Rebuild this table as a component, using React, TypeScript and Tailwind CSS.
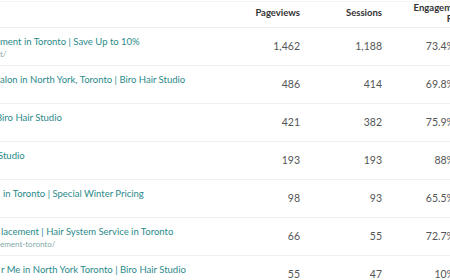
import React from "react";

type Row = { title: string; url?: string; shift: number; pv: string; s: string; er: string };

const rows: Row[] = [
  { title: "ment in Toronto | Save Up to 10%", url: "t/", shift: 0, pv: "1,462", s: "1,188", er: "73.4%" },
  { title: "alon in North York, Toronto | Biro Hair Studio", shift: 0, pv: "486", s: "414", er: "69.8%" },
  { title: "Biro Hair Studio", shift: -4, pv: "421", s: "382", er: "75.9%" },
  { title: "Studio", shift: -2, pv: "193", s: "193", er: "88%" },
  { title: "in Toronto | Special Winter Pricing", shift: 3, pv: "98", s: "93", er: "65.5%" },
  { title: "lacement | Hair System Service in Toronto", url: "ement-toronto/", shift: 1, pv: "66", s: "55", er: "72.7%" },
  { title: "r Me in North York Toronto | Biro Hair Studio", shift: 1, pv: "55", s: "47", er: "10%" },
];

export default function App() {
  return (
    <div
      className="w-[450px] h-[280px] overflow-hidden bg-white"
      style={{ fontFamily: "Lato, 'Open Sans', sans-serif" }}
    >
      <div className="w-[480px] border-t border-[#f4f4f4] mt-[1px]">
        <div className="grid grid-cols-[250px_50px_82px_84px] h-[26px] border-b border-[#eeeeee] text-[9.5px] font-bold text-[#333333] items-center pb-[4px]">
          <div />
          <div className="text-right">Pageviews</div>
          <div className="text-right">Sessions</div>
          <div className="text-right leading-[11px]">
            Engagement
            <br />
            Rate
          </div>
        </div>
        {rows.map((r, i) => (
          <div
            key={i}
            className="grid grid-cols-[250px_50px_82px_84px] h-[38px] border-b border-[#f0f0f0] text-[10.5px]"
          >
            <div className="overflow-hidden whitespace-nowrap pt-[7px]">
              <div
                className="text-[#2a8a89] text-[9.5px] leading-[14px]"
                style={{ marginLeft: r.shift }}
              >
                {r.title}
              </div>
              {r.url && (
                <div className="text-[#7fa9a8] text-[8px] leading-[11px]">{r.url}</div>
              )}
            </div>
            <div className="flex items-center justify-end text-[#555555]">{r.pv}</div>
            <div className="flex items-center justify-end text-[#555555]">{r.s}</div>
            <div className="flex items-center justify-end pr-[11px] text-[#555555]">{r.er}</div>
          </div>
        ))}
      </div>
    </div>
  );
}
